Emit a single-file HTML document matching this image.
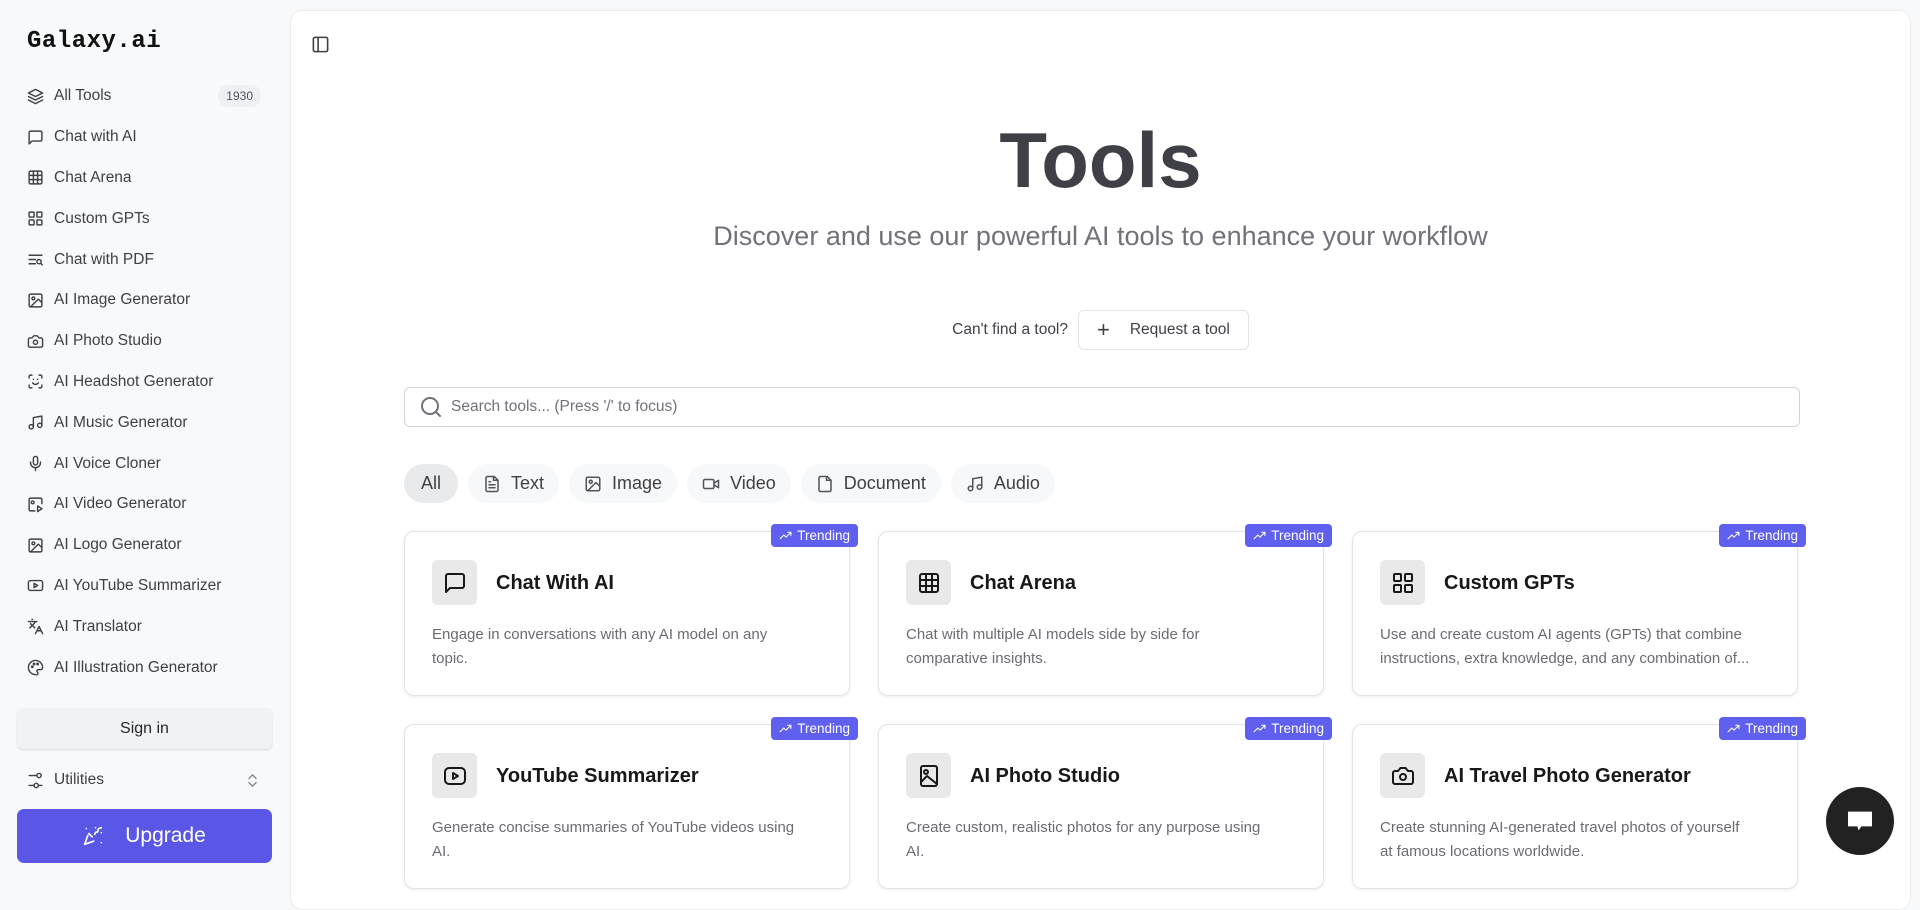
<!DOCTYPE html>
<html><head><meta charset="utf-8"><style>
*{box-sizing:border-box;margin:0;padding:0}
body{width:1920px;height:879px;overflow:hidden;background:#f8f9fa;font-family:"Liberation Sans",sans-serif;color:#27272a;position:relative}
.sb{position:absolute;left:0;top:0;width:290px;height:879px}
.logo{position:absolute;left:27px;top:28px;font:bold 24px "Liberation Mono",monospace;letter-spacing:0.5px;color:#111}
.nav{position:absolute;left:27px;top:76px;width:240px}
.it{height:40.8px;display:flex;align-items:center;font-size:15.5px;color:#3f3f46}
.it svg{width:17px;height:17px;margin-right:10px;flex:none}
.badge{margin-left:auto;background:#eef0f3;color:#52525b;font-size:12px;border-radius:10px;padding:4px 8px;margin-right:6px}
.signin{position:absolute;left:17px;top:708px;width:255px;height:41px;background:#f1f2f4;border-radius:6px;box-shadow:0 1px 2px rgba(0,0,0,.12);text-align:center;line-height:41px;font-size:16px;color:#27272a}
.util{position:absolute;left:27px;top:767px;width:240px;height:26px;display:flex;align-items:center;font-size:15.5px;color:#3f3f46}
.util svg{width:17px;height:17px;margin-right:10px}
.up{position:absolute;left:17px;top:809px;width:255px;height:54px;background:#5b57e6;border-radius:7px;color:#fff;font-size:21px;display:flex;align-items:center;justify-content:center;gap:22px}
.main{position:absolute;left:290px;top:10px;width:1621px;height:900px;background:#fff;border:1px solid #ececec;border-radius:12px}
.ic{fill:none;stroke:currentColor;stroke-width:2;stroke-linecap:round;stroke-linejoin:round}
h1{position:absolute;left:0;width:100%;top:104px;text-align:center;font-size:78px;font-weight:bold;color:#3f3f46}
.sub{position:absolute;left:0;width:100%;top:210px;text-align:center;font-size:27px;color:#71717a}
.req{position:absolute;top:299px;left:0;width:100%;display:flex;justify-content:center;align-items:center;gap:10px;font-size:15.5px;color:#3f3f46}
.rb{height:40px;border:1px solid #e4e4e7;border-radius:6px;padding:0 18px;display:flex;align-items:center;gap:20px;font-size:15.5px}
.search{position:absolute;left:113px;top:376px;width:1396px;height:40px;border:1px solid #d4d4d8;border-radius:6px;display:flex;align-items:center;padding-left:14px;color:#71717a;font-size:15.5px}
.search svg{width:24px;height:24px;margin-right:8px;color:#71717a}
.filt{position:absolute;top:453px;left:113px;display:flex;gap:10px}
.f{height:39px;border-radius:20px;background:#f7f8f9;display:flex;align-items:center;padding:0 15px;font-size:18px;color:#3f3f46;gap:10px}
.f svg{width:18px;height:18px;color:#52525b}
.f.a{background:#e9eaec;padding:0 17px}
.card{position:absolute;width:446px;height:165px;border:1px solid #e4e4e7;border-radius:10px;box-shadow:0 1px 3px rgba(0,0,0,.08);background:#fff}
.tr{position:absolute;right:-9px;top:-8px;height:23px;background:#5f5ff0;color:#fff;font-size:13.5px;border-radius:4px;padding:0 8px;display:flex;align-items:center;gap:5px}
.tr svg{width:13px;height:13px}
.ib{position:absolute;left:27px;top:28px;width:45px;height:45px;border-radius:6px;background:#e9e9ea;display:flex;align-items:center;justify-content:center;color:#18181b}
.ib svg{width:24px;height:24px}
.ct{position:absolute;left:91px;top:40px;font-size:20px;font-weight:bold;color:#18181b}
.cd{position:absolute;left:27px;top:91px;width:366px;font-size:15px;line-height:24px;color:#6b6b72}
.chat{position:absolute;left:1826px;top:787px;width:68px;height:68px;border-radius:50%;background:#222;display:flex;align-items:center;justify-content:center}
</style></head><body>
<div class="sb">
<div class="logo">Galaxy.ai</div>
<div class="nav">
<div class="it"><svg class="ic" viewBox="0 0 24 24"><path d="M12 2 2 7l10 5 10-5-10-5zM2 12l10 5 10-5M2 17l10 5 10-5"/></svg>All Tools<span class="badge">1930</span></div>
<div class="it"><svg class="ic" viewBox="0 0 24 24"><path d="M21 15a2 2 0 0 1-2 2H7l-4 4V5a2 2 0 0 1 2-2h14a2 2 0 0 1 2 2z"/></svg>Chat with AI</div>
<div class="it"><svg class="ic" viewBox="0 0 24 24"><rect x="3" y="3" width="18" height="18" rx="2"/><path d="M3 9h18M3 15h18M9 3v18M15 3v18"/></svg>Chat Arena</div>
<div class="it"><svg class="ic" viewBox="0 0 24 24"><rect x="3" y="3" width="7" height="7" rx="1"/><rect x="14" y="3" width="7" height="7" rx="1"/><rect x="3" y="14" width="7" height="7" rx="1"/><rect x="14" y="14" width="7" height="7" rx="1"/></svg>Custom GPTs</div>
<div class="it"><svg class="ic" viewBox="0 0 24 24"><path d="M3 6h18M3 12h9M3 18h9"/><circle cx="17" cy="15" r="3"/><path d="m19.5 17.5 2 2"/></svg>Chat with PDF</div>
<div class="it"><svg class="ic" viewBox="0 0 24 24"><rect x="3" y="3" width="18" height="18" rx="2"/><circle cx="9" cy="9" r="2"/><path d="m21 15-5-5L5 21"/></svg>AI Image Generator</div>
<div class="it"><svg class="ic" viewBox="0 0 24 24"><path d="M14.5 4h-5L7 7H4a2 2 0 0 0-2 2v9a2 2 0 0 0 2 2h16a2 2 0 0 0 2-2V9a2 2 0 0 0-2-2h-3z"/><circle cx="12" cy="13" r="3"/></svg>AI Photo Studio</div>
<div class="it"><svg class="ic" viewBox="0 0 24 24"><path d="M3 7V5a2 2 0 0 1 2-2h2M17 3h2a2 2 0 0 1 2 2v2M21 17v2a2 2 0 0 1-2 2h-2M7 21H5a2 2 0 0 1-2-2v-2M8 14s1.5 2 4 2 4-2 4-2M9 9h.01M15 9h.01"/></svg>AI Headshot Generator</div>
<div class="it"><svg class="ic" viewBox="0 0 24 24"><path d="M9 18V5l12-2v13"/><circle cx="6" cy="18" r="3"/><circle cx="18" cy="16" r="3"/></svg>AI Music Generator</div>
<div class="it"><svg class="ic" viewBox="0 0 24 24"><rect x="9" y="2" width="6" height="12" rx="3"/><path d="M19 10v1a7 7 0 0 1-14 0v-1M12 18v4"/></svg>AI Voice Cloner</div>
<div class="it"><svg class="ic" viewBox="0 0 24 24"><path d="M21 11V5a2 2 0 0 0-2-2H5a2 2 0 0 0-2 2v14a2 2 0 0 0 2 2h6"/><circle cx="8" cy="9" r="2"/><path d="m15 14 6 4-6 4z"/></svg>AI Video Generator</div>
<div class="it"><svg class="ic" viewBox="0 0 24 24"><rect x="3" y="3" width="18" height="18" rx="2"/><circle cx="9" cy="9" r="2"/><path d="m21 15-5-5L5 21"/></svg>AI Logo Generator</div>
<div class="it"><svg class="ic" viewBox="0 0 24 24"><rect x="2" y="5" width="20" height="14" rx="3"/><path d="m10 9 5 3-5 3z"/></svg>AI YouTube Summarizer</div>
<div class="it"><svg class="ic" viewBox="0 0 24 24"><path d="m5 8 6 6M4 14l6-6 2-3M2 5h12M7 2h1M22 22l-5-10-5 10M14 18h6"/></svg>AI Translator</div>
<div class="it"><svg class="ic" viewBox="0 0 24 24"><path d="M12 22a10 10 0 1 1 10-10c0 2.5-2 3-3.5 3H16a2 2 0 0 0-1.5 3.3A2 2 0 0 1 12 22z"/><circle cx="7.5" cy="11" r="1"/><circle cx="10" cy="7" r="1"/><circle cx="15" cy="7" r="1"/></svg>AI Illustration Generator</div>
</div>
<div class="signin">Sign in</div>
<div class="util"><svg class="ic" viewBox="0 0 24 24"><path d="M14 5H3M10 19H3M21 19h-5"/><circle cx="17" cy="5" r="3"/><circle cx="13" cy="19" r="3"/></svg>Utilities<svg class="ic" viewBox="0 0 24 24" style="margin-left:auto;margin-right:6px;color:#888"><path d="m7 15 5 5 5-5M7 9l5-5 5 5"/></svg></div>
<div class="up"><svg class="ic" viewBox="0 0 24 24" width="20" height="20"><path d="M5.8 11.3 2 22l10.7-3.8M4 3h.01M22 8h.01M15 2h.01M22 20h.01M22 2l-2.2.7a2.9 2.9 0 0 0-1.9 3.4c.1.6-.3 1.2-1 1.2h-.4c-.9 0-1.6.6-1.8 1.4L14 10M11 13l-4-4"/></svg>Upgrade</div>
</div>
<div class="main">
<svg class="ic" viewBox="0 0 24 24" style="position:absolute;left:20px;top:24px;width:19px;height:19px;color:#3f3f46"><rect x="3" y="3" width="18" height="18" rx="2"/><path d="M9 3v18"/></svg>
<h1>Tools</h1>
<div class="sub">Discover and use our powerful AI tools to enhance your workflow</div>
<div class="req">Can't find a tool?<div class="rb"><span style="font-size:22px;line-height:1">+</span>Request a tool</div></div>
<div class="search"><svg class="ic" viewBox="0 0 24 24"><circle cx="11" cy="11" r="8"/><path d="m21 21-4.3-4.3"/></svg>Search tools... (Press '/' to focus)</div>
<div class="filt">
<div class="f a">All</div>
<div class="f"><svg class="ic" viewBox="0 0 24 24"><path d="M15 2H6a2 2 0 0 0-2 2v16a2 2 0 0 0 2 2h12a2 2 0 0 0 2-2V7zM14 2v5h5M16 13H8M16 17H8M10 9H8"/></svg>Text</div>
<div class="f"><svg class="ic" viewBox="0 0 24 24"><rect x="3" y="3" width="18" height="18" rx="2"/><circle cx="9" cy="9" r="2"/><path d="m21 15-5-5L5 21"/></svg>Image</div>
<div class="f"><svg class="ic" viewBox="0 0 24 24"><path d="m16 13 6 4V7l-6 4"/><rect x="2" y="6" width="14" height="12" rx="2"/></svg>Video</div>
<div class="f"><svg class="ic" viewBox="0 0 24 24"><path d="M15 2H6a2 2 0 0 0-2 2v16a2 2 0 0 0 2 2h12a2 2 0 0 0 2-2V7zM14 2v5h5"/></svg>Document</div>
<div class="f"><svg class="ic" viewBox="0 0 24 24"><path d="M9 18V5l12-2v13"/><circle cx="6" cy="18" r="3"/><circle cx="18" cy="16" r="3"/></svg>Audio</div>
</div>

<div class="card" style="left:113px;top:520px"><div class="tr"><svg class="ic" viewBox="0 0 24 24"><path d="m2 18 7-7 4 4 9-9M16 6h6v6"/></svg>Trending</div><div class="ib"><svg class="ic" viewBox="0 0 24 24"><path d="M21 15a2 2 0 0 1-2 2H7l-4 4V5a2 2 0 0 1 2-2h14a2 2 0 0 1 2 2z"/></svg></div><div class="ct">Chat With AI</div><div class="cd">Engage in conversations with any AI model on any topic.</div></div>
<div class="card" style="left:587px;top:520px"><div class="tr"><svg class="ic" viewBox="0 0 24 24"><path d="m2 18 7-7 4 4 9-9M16 6h6v6"/></svg>Trending</div><div class="ib"><svg class="ic" viewBox="0 0 24 24"><rect x="3" y="3" width="18" height="18" rx="2"/><path d="M3 9h18M3 15h18M9 3v18M15 3v18"/></svg></div><div class="ct">Chat Arena</div><div class="cd">Chat with multiple AI models side by side for comparative insights.</div></div>
<div class="card" style="left:1061px;top:520px"><div class="tr"><svg class="ic" viewBox="0 0 24 24"><path d="m2 18 7-7 4 4 9-9M16 6h6v6"/></svg>Trending</div><div class="ib"><svg class="ic" viewBox="0 0 24 24"><rect x="3" y="3" width="7" height="7" rx="1"/><rect x="14" y="3" width="7" height="7" rx="1"/><rect x="3" y="14" width="7" height="7" rx="1"/><rect x="14" y="14" width="7" height="7" rx="1"/></svg></div><div class="ct">Custom GPTs</div><div class="cd" style="width:405px">Use and create custom AI agents (GPTs) that combine<br>instructions, extra knowledge, and any combination of...</div></div>

<div class="card" style="left:113px;top:713px"><div class="tr"><svg class="ic" viewBox="0 0 24 24"><path d="m2 18 7-7 4 4 9-9M16 6h6v6"/></svg>Trending</div><div class="ib"><svg class="ic" viewBox="0 0 24 24"><rect x="2" y="4" width="20" height="16" rx="4"/><path d="m10 9 5 3-5 3z"/></svg></div><div class="ct">YouTube Summarizer</div><div class="cd">Generate concise summaries of YouTube videos using AI.</div></div>
<div class="card" style="left:587px;top:713px"><div class="tr"><svg class="ic" viewBox="0 0 24 24"><path d="m2 18 7-7 4 4 9-9M16 6h6v6"/></svg>Trending</div><div class="ib"><svg class="ic" viewBox="0 0 24 24"><rect x="4" y="2" width="16" height="20" rx="2"/><circle cx="9" cy="8" r="2"/><path d="M4 18l6-6 10 8"/></svg></div><div class="ct">AI Photo Studio</div><div class="cd">Create custom, realistic photos for any purpose using AI.</div></div>
<div class="card" style="left:1061px;top:713px"><div class="tr"><svg class="ic" viewBox="0 0 24 24"><path d="m2 18 7-7 4 4 9-9M16 6h6v6"/></svg>Trending</div><div class="ib"><svg class="ic" viewBox="0 0 24 24"><path d="M14.5 4h-5L7 7H4a2 2 0 0 0-2 2v9a2 2 0 0 0 2 2h16a2 2 0 0 0 2-2V9a2 2 0 0 0-2-2h-3z"/><circle cx="12" cy="13" r="3"/></svg></div><div class="ct">AI Travel Photo Generator</div><div class="cd">Create stunning AI-generated travel photos of yourself at famous locations worldwide.</div></div>
</div>
<div class="chat"><svg viewBox="0 0 24 24" width="32" height="32"><path d="M3 5h18v11H13l-2 3-1-3H3z" fill="#fff"/></svg></div>
</body></html>
